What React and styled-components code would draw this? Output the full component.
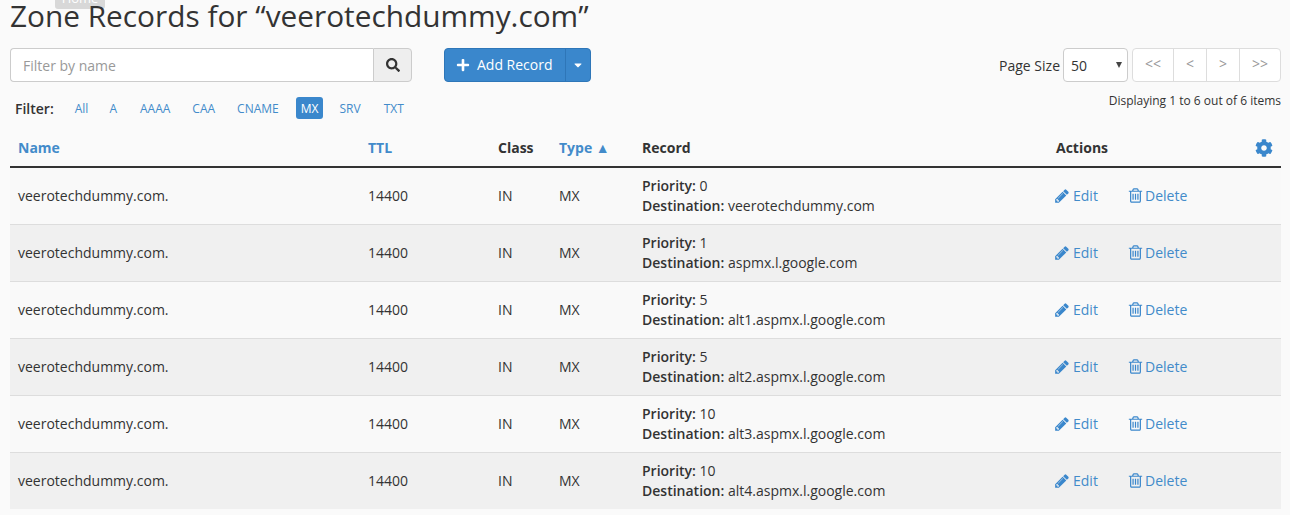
import React from 'react';
import styled, { createGlobalStyle } from 'styled-components';
import { FaSearch, FaPlus, FaCog, FaCaretDown } from 'react-icons/fa';

const GlobalStyle = createGlobalStyle`
  html, body {
    margin: 0;
    padding: 0;
    background: #fafafa;
    font-family: "Open Sans", "Liberation Sans", sans-serif;
    font-size: 14px;
    color: #333;
  }
  * { box-sizing: border-box; }
`;

const Page = styled.div`
  position: relative;
  width: 1290px;
  height: 515px;
  overflow: hidden;
  padding: 0 9px 0 10px;
`;

const HomeTip = styled.div`
  position: absolute;
  left: 55px;
  top: -10px;
  width: 50px;
  height: 19px;
  border-radius: 3px;
  background: #d8d8d8;
  color: #fff;
  font-size: 13px;
  line-height: 16px;
  text-align: center;
`;

const Title = styled.h1`
  position: relative;
  margin: 0;
  height: 48px;
  font-size: 29.8px;
  font-weight: 400;
  line-height: 31px;
  color: #333;
`;

const Toolbar = styled.div`
  display: flex;
  align-items: flex-start;
  height: 34px;
`;

const SearchGroup = styled.div`
  display: flex;
  width: 402px;
  height: 34px;
  margin-right: 32px;
`;

const SearchInput = styled.div`
  flex: 1;
  padding-left: 12px;
  border: 1px solid #ccc;
  border-right: 0;
  border-radius: 4px 0 0 4px;
  background: #fff;
  color: #999;
  line-height: 33px;
`;

const SearchButton = styled.div`
  display: flex;
  align-items: center;
  justify-content: center;
  width: 39px;
  border: 1px solid #ccc;
  border-radius: 0 4px 4px 0;
  background: #eee;
  color: #333;
  font-size: 14px;
`;

const AddGroup = styled.div`
  display: flex;
  width: 147px;
  height: 34px;
  color: #fff;
  background: #3a87cc;
  border: 1px solid #2e76b8;
  border-radius: 4px;
`;

const AddMain = styled.div`
  display: flex;
  align-items: center;
  gap: 7px;
  width: 121px;
  padding-left: 11px;
  border-right: 1px solid #2e76b8;
  line-height: 30px;
`;

const AddCaret = styled.div`
  display: flex;
  align-items: center;
  justify-content: center;
  flex: 1;
  font-size: 12px;
`;

const PageControls = styled.div`
  display: flex;
  align-items: center;
  margin-left: auto;
  height: 34px;
`;

const PageLabel = styled.span`
  margin-right: 3px;
`;

const SizeSelect = styled.div`
  display: flex;
  align-items: center;
  justify-content: space-between;
  width: 65px;
  height: 34px;
  margin-right: 4px;
  padding: 0 5px 0 7px;
  border: 1px solid #ccc;
  border-radius: 4px;
  background: #fff;
`;

const SelectArrow = styled.span`
  width: 0;
  height: 0;
  border-left: 3px solid transparent;
  border-right: 3px solid transparent;
  border-top: 6px solid #444;
`;

const Pager = styled.div`
  display: flex;
  width: 149px;
  height: 34px;
  border: 1px solid #ddd;
  border-radius: 4px;
  background: #fff;
`;

const PagerItem = styled.div`
  flex: 0 0 ${(p) => p.$w}px;
  text-align: center;
  color: #999;
  line-height: 30px;
  border-right: ${(p) => (p.$last ? '0' : '1px solid #ddd')};
`;

const FilterRow = styled.div`
  display: flex;
  align-items: flex-start;
  justify-content: space-between;
  height: 47px;
  padding: 15px 0 0 5px;
`;

const FilterList = styled.div`
  display: flex;
  align-items: center;
  height: 22px;
  font-size: 12px;
`;

const FilterLabel = styled.strong`
  margin-right: 16px;
  font-size: 14px;
  font-weight: 600;
  line-height: 23px;
  color: #333;
`;

const FilterTag = styled.span`
  padding: 0 5px;
  margin-right: ${(p) => p.$gap}px;
  height: 22px;
  line-height: 23px;
  border-radius: 3px;
  color: ${(p) => (p.$active ? '#fff' : '#428bca')};
  background: ${(p) => (p.$active ? '#3a87cc' : 'transparent')};
`;

const Showing = styled.div`
  margin-top: -5px;
  font-size: 12px;
  line-height: 18px;
`;

const Table = styled.table`
  width: 1271px;
  border-collapse: collapse;
  table-layout: fixed;
`;

const HeadCell = styled.th`
  height: 38px;
  padding: 0 8px;
  text-align: left;
  font-size: 14px;
  font-weight: 700;
  color: ${(p) => (p.$link ? '#428bca' : '#333')};
  border-bottom: 2px solid #333;
  width: ${(p) => p.$w}px;
  position: relative;
`;

const GearLink = styled.span`
  position: absolute;
  right: 8px;
  top: 9px;
  color: #3a87cc;
  font-size: 18px;
`;

const Row = styled.tr`
  height: 57px;
  background: ${(p) => (p.$odd ? '#f0f0f0' : '#f9f9f9')};
  border-bottom: 1px solid #ddd;
  &:last-child { border-bottom: 0; }
`;

const Cell = styled.td`
  padding: 0 8px;
  line-height: 20px;
  vertical-align: middle;
`;

const FieldName = styled.span`
  font-weight: 600;
`;

const Actions = styled.div`
  display: flex;
  align-items: center;
  margin-left: -2px;
`;

const ActionLink = styled.span`
  display: flex;
  align-items: center;
  gap: ${(p) => p.$gap}px;
  color: #428bca;
  width: ${(p) => p.$w}px;
  svg { color: #3a87cc; }
`;

// font awesome 4 glyphs, the 5 set in react-icons draws these two differently
const PencilIcon = () => (
  <svg width="16" height="16" viewBox="0 0 1792 1792" fill="currentColor">
    <path d="M491 1536l91-91-235-235-91 91v107h128v128h107zm523-928q0-22-22-22-10 0-17 7l-542 542q-7 7-7 17 0 22 22 22 10 0 17-7l542-542q7-7 7-17zm-54-192l416 416-832 832h-416v-416zm683 96q0 53-37 90l-166 166-416-416 166-165q36-38 90-38 53 0 91 38l235 234q37 39 37 91z" />
  </svg>
);

const TrashIcon = () => (
  <svg width="17" height="17" viewBox="0 0 1792 1792" fill="currentColor">
    <path d="M704 736v576q0 14-9 23t-23 9h-64q-14 0-23-9t-9-23v-576q0-14 9-23t23-9h64q14 0 23 9t9 23zm256 0v576q0 14-9 23t-23 9h-64q-14 0-23-9t-9-23v-576q0-14 9-23t23-9h64q14 0 23 9t9 23zm256 0v576q0 14-9 23t-23 9h-64q-14 0-23-9t-9-23v-576q0-14 9-23t23-9h64q14 0 23 9t9 23zm128 724v-948h-896v948q0 22 7 40.5t14.5 27 10.5 8.5h832q3 0 10.5-8.5t14.5-27 7-40.5zm-672-1076h448l-48-117q-7-9-17-11h-317q-10 2-17 11zm928 32v64q0 14-9 23t-23 9h-96v948q0 83-47 143.5t-113 60.5h-832q-66 0-113-58.5t-47-141.5v-952h-96q-14 0-23-9t-9-23v-64q0-14 9-23t23-9h309l70-167q15-37 54-63t79-26h320q40 0 79 26t54 63l70 167h309q14 0 23 9t9 23z" />
  </svg>
);

const rows = [
  ['0', 'veerotechdummy.com'],
  ['1', 'aspmx.l.google.com'],
  ['5', 'alt1.aspmx.l.google.com'],
  ['5', 'alt2.aspmx.l.google.com'],
  ['10', 'alt3.aspmx.l.google.com'],
  ['10', 'alt4.aspmx.l.google.com'],
];

const filters = [
  ['All', 11],
  ['A', 13],
  ['AAAA', 12],
  ['CAA', 12],
  ['CNAME', 12],
  ['MX', 11],
  ['SRV', 13],
  ['TXT', 0],
];

export default function App() {
  return (
    <Page>
      <GlobalStyle />
      <HomeTip>Home</HomeTip>
      <Title>Zone Records for “veerotechdummy.com”</Title>
      <Toolbar>
        <SearchGroup>
          <SearchInput>Filter by name</SearchInput>
          <SearchButton><FaSearch /></SearchButton>
        </SearchGroup>
        <AddGroup>
          <AddMain><FaPlus size={14} /> Add Record</AddMain>
          <AddCaret><FaCaretDown /></AddCaret>
        </AddGroup>
        <PageControls>
          <PageLabel>Page Size</PageLabel>
          <SizeSelect>50 <SelectArrow /></SizeSelect>
          <Pager>
            <PagerItem $w={41}>&lt;&lt;</PagerItem>
            <PagerItem $w={33}>&lt;</PagerItem>
            <PagerItem $w={33}>&gt;</PagerItem>
            <PagerItem $w={40} $last>&gt;&gt;</PagerItem>
          </Pager>
        </PageControls>
      </Toolbar>
      <FilterRow>
        <FilterList>
          <FilterLabel>Filter:</FilterLabel>
          {filters.map(([f, gap]) => (
            <FilterTag key={f} $gap={gap} $active={f === 'MX'}>{f}</FilterTag>
          ))}
        </FilterList>
        <Showing>Displaying 1 to 6 out of 6 items</Showing>
      </FilterRow>
      <Table>
        <thead>
          <tr>
            <HeadCell $w={350} $link>Name</HeadCell>
            <HeadCell $w={130} $link>TTL</HeadCell>
            <HeadCell $w={61}>Class</HeadCell>
            <HeadCell $w={83} $link>Type ▲</HeadCell>
            <HeadCell $w={414}>Record</HeadCell>
            <HeadCell $w={233}>Actions<GearLink><FaCog /></GearLink></HeadCell>
          </tr>
        </thead>
        <tbody>
          {rows.map(([priority, dest], i) => (
            <Row key={i} $odd={i % 2 === 1}>
              <Cell>veerotechdummy.com.</Cell>
              <Cell>14400</Cell>
              <Cell>IN</Cell>
              <Cell>MX</Cell>
              <Cell>
                <FieldName>Priority:</FieldName> {priority}<br />
                <FieldName>Destination:</FieldName> {dest}
              </Cell>
              <Cell>
                <Actions>
                  <ActionLink $w={73} $gap={3}><PencilIcon /> Edit</ActionLink>
                  <ActionLink $w={70} $gap={1}><TrashIcon /> Delete</ActionLink>
                </Actions>
              </Cell>
            </Row>
          ))}
        </tbody>
      </Table>
    </Page>
  );
}
